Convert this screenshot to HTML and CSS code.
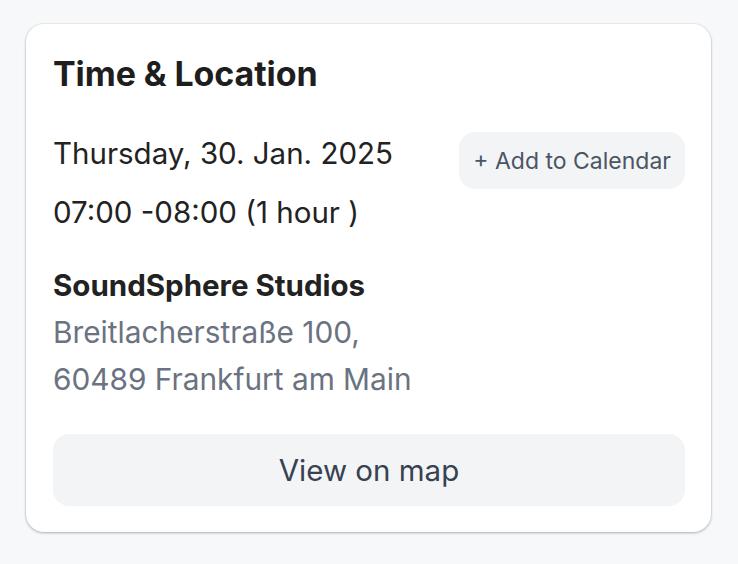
FILE: index.html
```html
<!DOCTYPE html>
<html>
<head>
<meta charset="utf-8">
<link rel="stylesheet" href="styles.css">
</head>
<body>
<div class="card">
  <h2 class="title">Time &amp; Location</h2>
  <div class="when">
    <div class="when-text">
      <div class="date">Thursday, 30. Jan. 2025</div>
      <div class="time">07:00 -08:00 (1 hour )</div>
    </div>
    <button class="cal-btn">+ Add to Calendar</button>
  </div>
  <div class="place">
    <div class="venue">SoundSphere Studios</div>
    <div class="addr">Breitlacherstraße 100,</div>
    <div class="addr">60489 Frankfurt am Main</div>
  </div>
  <button class="map-btn">View on map</button>
</div>
</body>
</html>
```
FILE: styles.css
```css
html, body { margin: 0; padding: 0; }
body {
  background: #f7f8fa;
  font-family: Inter, "Liberation Sans", sans-serif;
  width: 738px;
  height: 564px;
  overflow: hidden;
}
.card {
  margin: 24px 0 0 26px;
  width: 685px;
  box-sizing: border-box;
  padding: 30px 26px 26px 27px;
  background: #fff;
  border-radius: 18px;
  box-shadow: 0 1px 3px rgba(0,0,0,0.28), 0 0 0 1px rgba(0,0,0,0.03);
}
.title {
  margin: 0;
  font-size: 34px;
  line-height: 40px;
  font-weight: 700;
  color: #1e1e1e;
  letter-spacing: -0.1px;
}
.when {
  display: flex;
  justify-content: space-between;
  align-items: flex-start;
  margin-top: 30px;
}
.date, .time {
  font-size: 29.5px;
  line-height: 59px;
  color: #222;
}
.cal-btn {
  margin-top: 8px;
  border: none;
  background: #f3f4f6;
  border-radius: 16px;
  height: 57px;
  padding: 0 14px;
  font-family: inherit;
  font-size: 23px;
  color: #4b5563;
}
.place { margin-top: 20px; }
.venue {
  font-size: 29.5px;
  font-weight: 700;
  line-height: 47px;
  color: #222;
}
.addr {
  font-size: 29.8px;
  line-height: 47px;
  color: #6b7280;
}
.map-btn {
  display: block;
  width: 100%;
  margin-top: 31px;
  height: 72px;
  border: none;
  background: #f3f4f6;
  border-radius: 16px;
  font-family: inherit;
  font-size: 29.5px;
  color: #374151;
}
```
